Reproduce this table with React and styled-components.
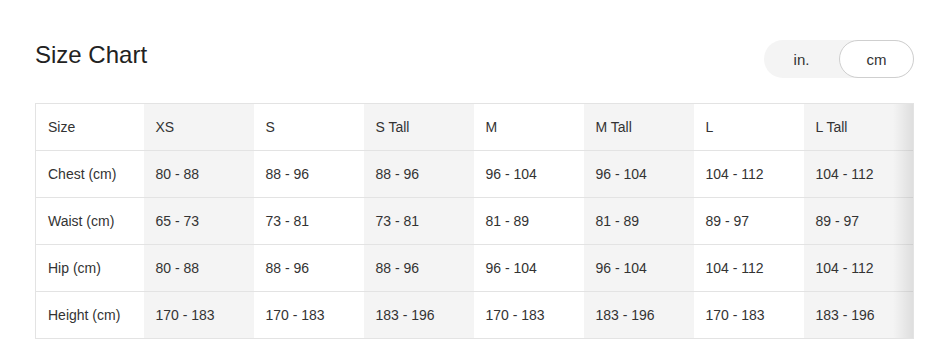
import React, {useState} from 'react'
import styled, {createGlobalStyle} from 'styled-components'

const rows = [
    ['Size', 'XS', 'S', 'S Tall', 'M', 'M Tall', 'L', 'L Tall'],
    ['Chest (cm)', '80 - 88', '88 - 96', '88 - 96', '96 - 104', '96 - 104', '104 - 112', '104 - 112'],
    ['Waist (cm)', '65 - 73', '73 - 81', '73 - 81', '81 - 89', '81 - 89', '89 - 97', '89 - 97'],
    ['Hip (cm)', '80 - 88', '88 - 96', '88 - 96', '96 - 104', '96 - 104', '104 - 112', '104 - 112'],
    ['Height (cm)', '170 - 183', '170 - 183', '183 - 196', '170 - 183', '183 - 196', '170 - 183', '183 - 196'],
]

function App() {
    const [unit, setUnit] = useState('cm');
    return (
        <Page>
            <Global />
            <Header>
                <Title>Size Chart</Title>
                <Toggle>
                    <UnitButton active={unit === 'in'} onClick={() => setUnit('in')}>in.</UnitButton>
                    <UnitButton active={unit === 'cm'} onClick={() => setUnit('cm')}>cm</UnitButton>
                </Toggle>
            </Header>
            <TableWrap>
                <Table>
                    <colgroup>
                        <col style={{width: 108}} />
                        {rows[0].slice(1).map((c) => <col key={c} style={{width: 110}} />)}
                    </colgroup>
                    <tbody>
                        {rows.map((row, i) => (
                            <tr key={i}>
                                {row.map((cell, j) => (
                                    <Cell key={j} shaded={j % 2 === 1}>{cell}</Cell>
                                ))}
                            </tr>
                        ))}
                    </tbody>
                </Table>
                <ScrollShade />
            </TableWrap>
        </Page>
    )
}

export default App

const Global = createGlobalStyle`
    body {
        margin: 0;
        background: #fff;
        font-family: "Liberation Sans", Arial, sans-serif;
        color: #333;
    }
`

const Page = styled.div`
    padding: 40px 29px 0 35px;
`

const Header = styled.div`
    display: flex;
    justify-content: space-between;
    align-items: flex-start;
    height: 38px;
    margin-bottom: 25px;
`

const Title = styled.h2`
    margin: 0;
    font-size: 24px;
    line-height: 30px;
    font-weight: 400;
    color: #222;
`

const Toggle = styled.div`
    display: flex;
    width: 150px;
    height: 38px;
    border-radius: 19px;
    background: #f4f4f4;
`

const UnitButton = styled.button`
    flex: 1;
    height: 38px;
    border-radius: 19px;
    border: 1px solid ${props => props.active ? '#cfcfcf' : 'transparent'};
    background: ${props => props.active ? '#fff' : 'transparent'};
    font-family: "Liberation Sans", Arial, sans-serif;
    font-size: 15px;
    color: #333;
    padding: 0;
    cursor: pointer;
`

const TableWrap = styled.div`
    position: relative;
    width: 879px;
`

const Table = styled.table`
    width: 879px;
    border-collapse: collapse;
    table-layout: fixed;
    border: 1px solid #e3e3e3;
`

const Cell = styled.td`
    height: 46px;
    padding: 0 0 0 12px;
    font-size: 14px;
    color: #333;
    background: ${props => props.shaded ? '#f4f4f4' : '#fff'};
    border-bottom: 1px solid #e3e3e3;
    white-space: nowrap;
`

const ScrollShade = styled.div`
    position: absolute;
    top: 1px;
    bottom: 1px;
    right: 1px;
    width: 20px;
    pointer-events: none;
    background: linear-gradient(to right, rgba(0, 0, 0, 0), rgba(0, 0, 0, 0.09));
`
